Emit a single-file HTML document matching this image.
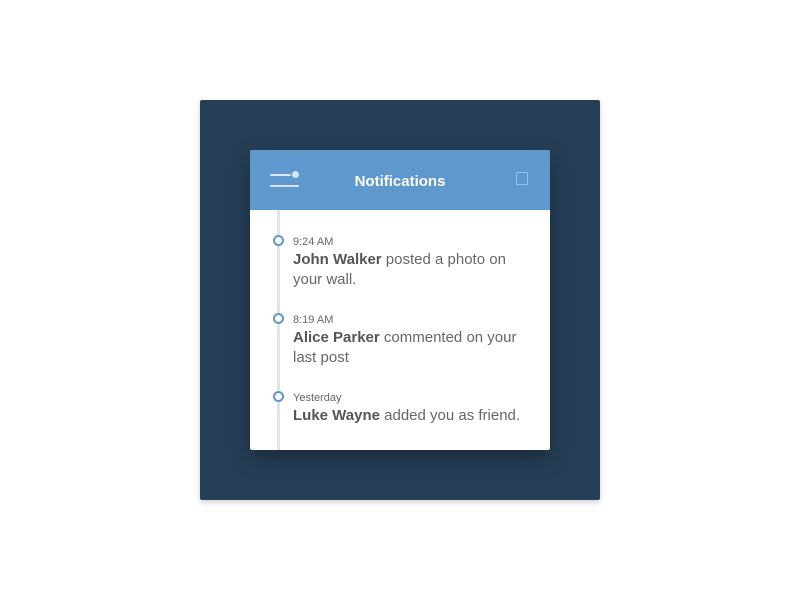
<!DOCTYPE html>
<html><head><style>
body{margin:0;width:800px;height:600px;background:#fff;position:relative;font-family:"Liberation Sans",sans-serif;}
.bg{position:absolute;left:200px;top:100px;width:400px;height:400px;background:#263f57;border-radius:2px;box-shadow:0 2px 6px rgba(0,0,0,.2);}
.card{position:absolute;left:250px;top:150px;width:300px;height:300px;background:#fff;border-radius:2px;box-shadow:0 8px 20px rgba(0,0,0,.35);overflow:hidden;}
.hd{height:60px;background:#5e98cc;position:relative;}
.hd .t{position:absolute;left:0;right:0;top:23px;text-align:center;color:#fff;font-weight:bold;font-size:15px;}
.l{position:absolute;height:2px;background:#d6e6f5;border-radius:1px;}
.line{position:absolute;left:27px;top:60px;width:3px;height:240px;background:#e3e3e3;}
.c{position:absolute;left:23px;width:7px;height:7px;border:2px solid #5e98cc;border-radius:50%;background:#fff;}
.it{position:absolute;left:43px;color:#666;width:228px;}
.tm{font-size:11px;line-height:15px;}
.tx{font-size:15px;line-height:20px;}
b{color:#555;}
</style></head><body>
<div class="bg"></div>
<div class="card">
<div class="hd">
<div class="l" style="left:20px;top:24px;width:21px"></div>
<div style="position:absolute;left:42px;top:21px;width:7px;height:7px;border-radius:50%;background:#d6e6f5"></div>
<div class="l" style="left:20px;top:35px;width:29px"></div>
<div class="t">Notifications</div>
<div style="position:absolute;left:266px;top:22px;width:10px;height:11px;border:1px solid #8cc4ee;"></div>
</div>
<div class="line"></div>
<div class="c" style="top:85px"></div>
<div class="it" style="top:85px"><div class="tm">9:24 AM</div><div class="tx"><b>John Walker</b> posted a photo on your wall.</div></div>
<div class="c" style="top:163px"></div>
<div class="it" style="top:163px"><div class="tm">8:19 AM</div><div class="tx"><b>Alice Parker</b> commented on your last post</div></div>
<div class="c" style="top:241px"></div>
<div class="it" style="top:241px"><div class="tm">Yesterday</div><div class="tx"><b>Luke Wayne</b> added you as friend.</div></div>
</div>
</body></html>
